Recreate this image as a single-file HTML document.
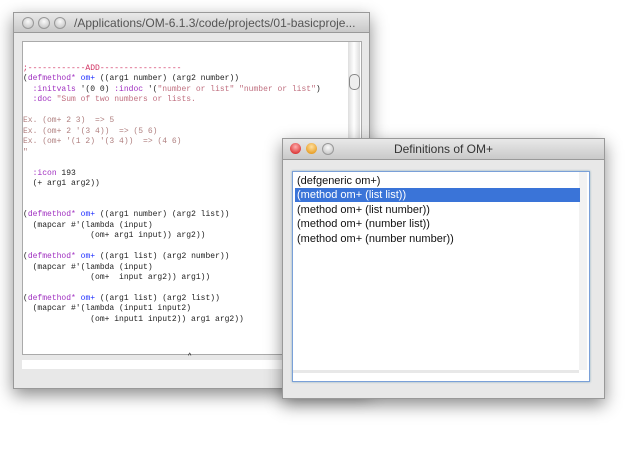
<!DOCTYPE html>
<html><head><style>
body{margin:0;width:630px;height:454px;background:#fff;position:relative;overflow:hidden;font-family:"Liberation Sans",sans-serif}
.win{position:absolute;background:#e8e8e8;border:1px solid #999;box-shadow:0 6px 16px rgba(0,0,0,.45)}
.tb{position:absolute;left:0;right:0;top:0;height:20px;background:linear-gradient(#e9e9e9,#c9c9c9);border-bottom:1px solid #999;font-size:12px;color:#333}
.dot{position:absolute;top:4px;width:11px;height:11px;border-radius:50%}
.g{background:radial-gradient(circle at 50% 35%,#fafafa,#bbb);border:1px solid #999;width:10px;height:10px}
pre{margin:0;font-family:"Liberation Mono",monospace;font-size:8px;line-height:10.45px;color:#222;position:absolute;left:23px;top:64px}
.p{color:#a030c0}.b{color:#2030ff}.r{color:#d03060}.d{color:#c07080}.e{color:#b08080}
.row{position:absolute;left:2px;width:283px;height:14px;font-size:11px;line-height:14px;padding-left:2px;color:#111}
</style></head><body>
<div class="win" style="left:13px;top:12px;width:355px;height:375px">
 <div class="tb" style="height:19px"><span class="dot g" style="left:8px"></span><span class="dot g" style="left:24px"></span><span class="dot g" style="left:40px"></span><span style="position:absolute;left:60px;top:3px;font-size:12px;color:#555">/Applications/OM-6.1.3/code/projects/01-basicproje...</span></div>
 <div style="position:absolute;left:8px;top:28px;width:338px;height:312px;background:#fff;border:1px solid #aaa"></div>
 <div style="position:absolute;left:334px;top:29px;width:12px;height:311px;background:linear-gradient(90deg,#ddd,#fff,#ddd)"></div>
 <div style="position:absolute;left:335px;top:61px;width:9px;height:14px;border:1px solid #888;border-radius:5px;background:#eee"></div>
 <div style="position:absolute;left:8px;top:347px;width:338px;height:9px;background:#fff"></div>
 <div style="position:absolute;left:174px;top:340px;font-size:7px">^</div>
</div>
<pre><span class="r">;------------ADD-----------------</span>
(<span class="p">defmethod*</span> <span class="b">om+</span> ((arg1 number) (arg2 number))
  <span class="p">:initvals</span> '(0 0) <span class="p">:indoc</span> '(<span class="d">"number or list" "number or list"</span>)
  <span class="p">:doc</span> <span class="d">"Sum of two numbers or lists.</span>
<span class="e">
Ex. (om+ 2 3)  =&gt; 5
Ex. (om+ 2 '(3 4))  =&gt; (5 6)
Ex. (om+ '(1 2) '(3 4))  =&gt; (4 6)
"</span>

  <span class="p">:icon</span> 193
  (+ arg1 arg2))


(<span class="p">defmethod*</span> <span class="b">om+</span> ((arg1 number) (arg2 list))
  (mapcar #'(lambda (input)
              (om+ arg1 input)) arg2))

(<span class="p">defmethod*</span> <span class="b">om+</span> ((arg1 list) (arg2 number))
  (mapcar #'(lambda (input)
              (om+  input arg2)) arg1))

(<span class="p">defmethod*</span> <span class="b">om+</span> ((arg1 list) (arg2 list))
  (mapcar #'(lambda (input1 input2)
              (om+ input1 input2)) arg1 arg2))</pre>
<div class="win" style="left:282px;top:138px;width:321px;height:259px">
 <div class="tb"><span class="dot" style="left:7px;background:radial-gradient(circle at 50% 35%,#ffb0b0,#d01010)"></span><span class="dot" style="left:23px;background:radial-gradient(circle at 50% 35%,#ffe0a0,#e08a00)"></span><span class="dot g" style="left:39px"></span><span style="position:absolute;left:0;right:0;text-align:center;top:3px">Definitions of OM+</span></div>
 <div style="position:absolute;left:9px;top:32px;width:296px;height:209px;background:#fff;border:1px solid #7aa0d8;box-shadow:0 0 2px #8ab"></div>
 <div style="position:absolute;left:296px;top:33px;width:8px;height:198px;background:#f2f2f2"></div>
 <div style="position:absolute;left:10px;top:231px;width:286px;height:3px;background:#e8e8e8"></div>
 <div style="position:absolute;left:10px;top:35px">
  <div class="row" style="top:0">(defgeneric om+)</div>
  <div class="row" style="top:14px;background:#3a74d8;color:#fff">(method om+ (list list))</div>
  <div class="row" style="top:29px">(method om+ (list number))</div>
  <div class="row" style="top:43px">(method om+ (number list))</div>
  <div class="row" style="top:58px">(method om+ (number number))</div>
 </div>
</div>
</body></html>
